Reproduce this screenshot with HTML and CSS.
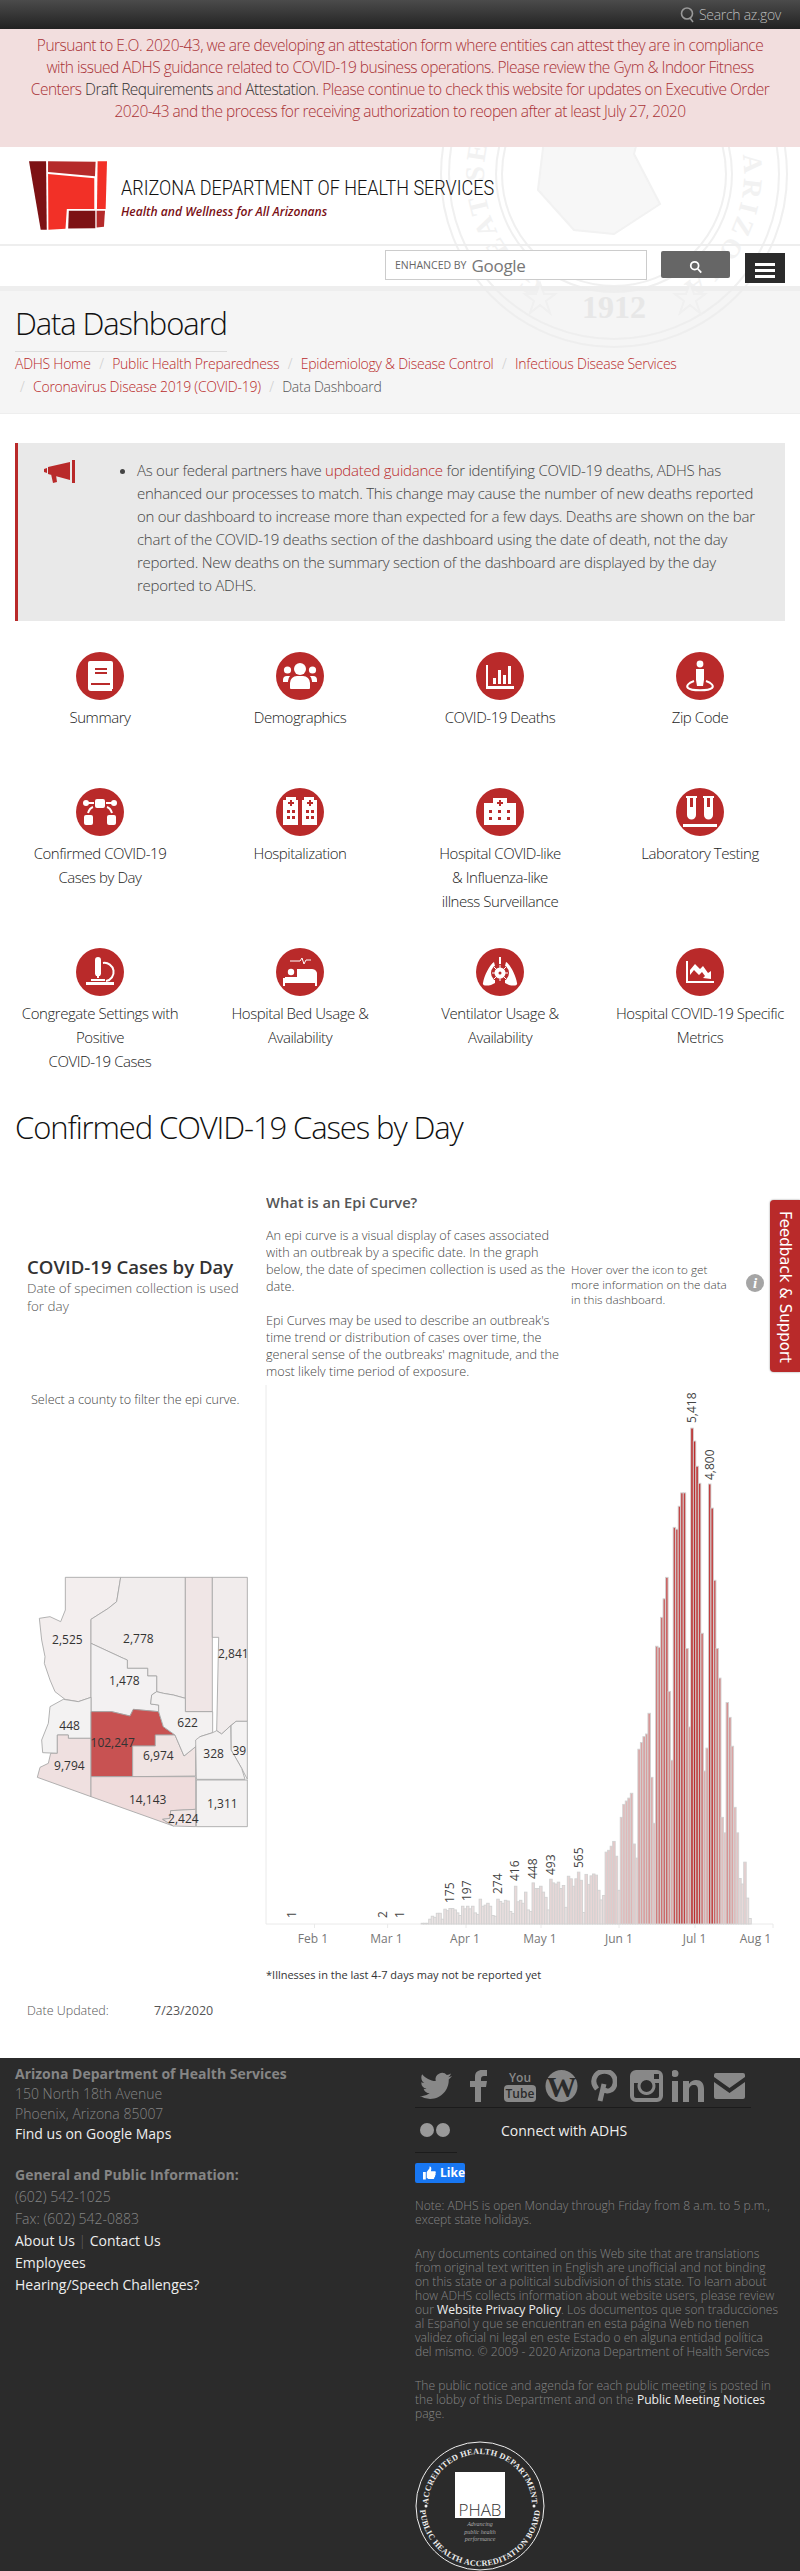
FILE: index.html
```html
<!DOCTYPE html>
<html lang="en">
<head>
    <meta charset="UTF-8">
    <meta name="viewport" content="width=device-width, initial-scale=1.0">
    <title>Data Dashboard</title>
    <link rel="stylesheet" href="styles.css">
</head>
<body>
    <div class="topbar">
        <svg class="topbar-icon" viewBox="0 0 16 16"><circle cx="7" cy="6.5" r="5.5"/><path d="M10 11l3 4"/></svg>
        <span>Search az.gov</span>
    </div>

    <div class="alert">
        Pursuant to E.O. 2020-43, we are developing an attestation form where entities can attest they are in compliance<br>
        with issued ADHS guidance related to COVID-19 business operations. Please review the Gym &amp; Indoor Fitness<br>
        Centers <a href="#">Draft Requirements</a> and <a href="#">Attestation</a>. Please continue to check this website for updates on Executive Order<br>
        2020-43 and the process for receiving authorization to reopen after at least July 27, 2020
    </div>

    <div class="masthead">
        <svg class="seal" viewBox="0 0 348 348">
            <defs>
                <path id="sealRing" d="M174 304a130 130 0 1 1 0-260a130 130 0 1 1 0 260"/>
            </defs>
            <circle cx="174" cy="174" r="173"/>
            <circle cx="174" cy="174" r="165"/>
            <circle cx="174" cy="174" r="118"/>
            <circle cx="174" cy="174" r="112"/>
            <text class="seal-ring"><textPath href="#sealRing" startOffset="9%" textLength="670">GREAT SEAL OF THE STATE OF ARIZONA</textPath></text>
            <path class="seal-fill" d="M92 60l30-34 40 14 44-16 42 30-20 50-24 10-10 40 26 50-46 30-40-4-36-40 6-50-24-20z"/>
            <text class="seal-year" x="174" y="178" text-anchor="middle">1912</text>
            <path class="seal-fill" d="M100 283l4 11 11 0-9 7 4 12-10-8-10 8 4-12-9-7 11 0zM250 283l4 11 11 0-9 7 4 12-10-8-10 8 4-12-9-7 11 0z"/>
        </svg>

        <header class="brand">
            <svg class="brand-logo" viewBox="27 35 233 205">
                <polygon fill="#7d1214" points="27,35 78,35 80,240 62,240"/>
                <polygon fill="#b52a2a" points="84,35 226,37 224,80 84,67"/>
                <polygon fill="#f23027" points="84,73 222,86 222,178 140,178 136,237 85,240"/>
                <polygon fill="#f23027" points="232,35 260,35 256,178 230,178"/>
                <polygon fill="#7d1214" points="146,183 225,183 225,235 144,236"/>
                <polygon fill="#b52a2a" points="229,183 254,183 251,231 229,233"/>
            </svg>
            <div class="brand-text">
                <div class="brand-name">ARIZONA DEPARTMENT OF HEALTH SERVICES</div>
                <div class="brand-tag">Health and Wellness for All Arizonans</div>
            </div>
        </header>

        <div class="searchrow">
            <div class="searchbox"><span class="enhanced">ENHANCED BY</span><span class="google">Google</span></div>
            <div class="searchbtn">
                <svg viewBox="0 0 16 16"><circle cx="6.5" cy="6.5" r="4.5"/><path d="M10 10l4 4.5"/></svg>
            </div>
            <div class="burger"><i></i><i></i><i></i></div>
        </div>

        <div class="titleblock">
            <h1 class="page-title">Data Dashboard</h1>
            <div class="crumbs">
                <a href="#">ADHS Home</a><span class="sep">/</span><a href="#">Public Health Preparedness</a><span class="sep">/</span><a href="#">Epidemiology &amp; Disease Control</a><span class="sep">/</span><a href="#">Infectious Disease Services</a><br>
                <span class="sep sep-first">/</span><a href="#">Coronavirus Disease 2019 (COVID-19)</a><span class="sep">/</span><span class="crumb-now">Data Dashboard</span>
            </div>
        </div>
    </div>

    <div class="callout">
        <svg class="callout-icon" viewBox="0 0 31 23">
            <path d="M0 9l3-1v5l-3-1zM4 7L26 2v18L4 14zM7 14l5 1 1 7-4 1zM28 0h3v23h-3z"/>
        </svg>
        <ul class="callout-list">
            <li>As our federal partners have <a href="#">updated guidance</a> for identifying COVID-19 deaths, ADHS has enhanced our processes to match. This change may cause the number of new deaths reported on our dashboard to increase more than expected for a few days. Deaths are shown on the bar chart of the COVID-19 deaths section of the dashboard using the date of death, not the day reported. New deaths on the summary section of the dashboard are displayed by the day reported to ADHS.</li>
        </ul>
    </div>

    <div class="tiles">
        <a class="tile" href="#">
            <svg class="tile-icon" viewBox="0 0 48 48"><circle class="disc" cx="24" cy="24" r="24"/>
                <path class="w" d="M14 9h21a2 2 0 0 1 2 2v26h-1v2H15a3 3 0 0 1-3-3V11a2 2 0 0 1 2-2z"/>
                <path class="r" d="M19 16h12v2H19zM19 20h12v2H19zM15 31h19v2H15z"/>
            </svg>
            <span>Summary</span>
        </a>
        <a class="tile" href="#">
            <svg class="tile-icon" viewBox="0 0 48 48"><circle class="disc" cx="24" cy="24" r="24"/>
                <circle class="w" cx="24" cy="17" r="6"/><circle class="w" cx="11.5" cy="18" r="3.6"/><circle class="w" cx="36.500" cy="18" r="3.6"/>
                <path class="w" d="M14 36v-5a7 7 0 0 1 7-7h6a7 7 0 0 1 7 7v5a1 1 0 0 1-1 1H15a1 1 0 0 1-1-1zM7 30v-2a4 4 0 0 1 4-4h3a9 9 0 0 0-2 5v1zM41 30v-2a4 4 0 0 0-4-4h-3a9 9 0 0 1 2 5v1z"/>
            </svg>
            <span>Demographics</span>
        </a>
        <a class="tile" href="#">
            <svg class="tile-icon" viewBox="0 0 48 48"><circle class="disc" cx="24" cy="24" r="24"/>
                <path class="w" d="M10 13h2v21h26v3H10zM17 26h3v6h-3zM22 18h3v14h-3zM27 23h3v9h-3zM32 14h3v18h-3z"/>
            </svg>
            <span>COVID-19 Deaths</span>
        </a>
        <a class="tile" href="#">
            <svg class="tile-icon" viewBox="0 0 48 48"><circle class="disc" cx="24" cy="24" r="24"/>
                <circle class="w" cx="24" cy="12" r="3.400"/>
                <path class="w" d="M20 17h8v11l-1 6h-6l-1-6z"/>
                <path class="ring" d="M18 29c-6 2-8 5-6 7 3 3 21 3 24 0 2-2 0-5-6-7"/>
            </svg>
            <span>Zip Code</span>
        </a>

        <a class="tile" href="#">
            <svg class="tile-icon" viewBox="0 0 48 48"><circle class="disc" cx="24" cy="24" r="24"/>
                <rect class="w" x="19" y="11" width="10" height="9" rx="2"/>
                <rect class="w" x="8" y="27" width="9" height="10" rx="2"/><rect class="w" x="31" y="27" width="9" height="10" rx="2"/>
                <circle class="w" cx="10" cy="15" r="3"/><circle class="w" cx="38" cy="15" r="3"/>
                <path class="ring" d="M12 15h6M36 15h-6M17 19c-3 1-4 3-5 6M31 19c3 1 4 3 5 6"/>
            </svg>
            <span>Confirmed COVID-19<br>Cases by Day</span>
        </a>
        <a class="tile" href="#">
            <svg class="tile-icon" viewBox="0 0 48 48"><circle class="disc" cx="24" cy="24" r="24"/>
                <path class="w" d="M10 9h10v3h2v25H7V12h3zM28 9h10v3h3v25H26V12h2z"/>
                <path class="r" d="M14 12h2v2h2v2h-2v2h-2v-2h-2v-2h2zM33 12h2v2h2v2h-2v2h-2v-2h-2v-2h2zM11 22h3v3h-3zM16 22h3v3h-3zM11 28h3v3h-3zM16 28h3v3h-3zM30 22h3v3h-3zM35 22h3v3h-3zM30 28h3v3h-3zM35 28h3v3h-3z"/>
            </svg>
            <span>Hospitalization</span>
        </a>
        <a class="tile" href="#">
            <svg class="tile-icon" viewBox="0 0 48 48"><circle class="disc" cx="24" cy="24" r="24"/>
                <path class="w" d="M17 10h14v5h9v22H8V15h9z"/>
                <path class="r" d="M23 12h2v2h2v2h-2v2h-2v-2h-2v-2h2zM13 22h3v3h-3zM22 22h3v3h-3zM31 22h3v3h-3zM13 29h3v3h-3zM22 29h3v3h-3zM31 29h3v3h-3z"/>
            </svg>
            <span>Hospital COVID-like<br>&amp; Influenza-like<br>illness Surveillance</span>
        </a>
        <a class="tile" href="#">
            <svg class="tile-icon" viewBox="0 0 48 48"><circle class="disc" cx="24" cy="24" r="24"/>
                <path class="w" d="M10 8h11v2h-1v17a4.500 4.500 0 0 1-9 0V10h-1zM27 8h11v2h-1v17a4.500 4.500 0 0 1-9 0V10h-1zM7 36h34v3H7z"/>
                <path class="r" d="M14 10h3v9h-3zM31 10h3v9h-3z"/>
            </svg>
            <span>Laboratory Testing</span>
        </a>

        <a class="tile" href="#">
            <svg class="tile-icon" viewBox="0 0 48 48"><circle class="disc" cx="24" cy="24" r="24"/>
                <path class="w" d="M19 12a3 3 0 0 1 6 0v14l-1 2h-1v2h-2v-2h-1l-1-2z"/>
                <path class="ring" d="M27 15a9 9 0 0 1 3 18"/>
                <path class="w" d="M15 31h14v2H15zM10 34h28v3H10z"/>
            </svg>
            <span>Congregate Settings with<br>Positive<br>COVID-19 Cases</span>
        </a>
        <a class="tile" href="#">
            <svg class="tile-icon" viewBox="0 0 48 48"><circle class="disc" cx="24" cy="24" r="24"/>
                <path class="ring thin" d="M14 13h10l2-3 2 6 2-4h5"/>
                <path class="w" d="M7 18h2v12h32v-3a5 5 0 0 0-5-6H21v8H9V18zM7 30h34v8h-2v-3H9v3H7z"/>
                <circle class="w" cx="15" cy="24" r="3.200"/>
            </svg>
            <span>Hospital Bed Usage &amp;<br>Availability</span>
        </a>
        <a class="tile" href="#">
            <svg class="tile-icon" viewBox="0 0 48 48"><circle class="disc" cx="24" cy="24" r="24"/>
                <path class="w" d="M23 9h2v9h-2zM18 14c-4 2-10 14-11 21-1 3 4 3 8 2l4-2V18zM30 14c4 2 10 14 11 21 1 3-4 3-8 2l-4-2V18z"/>
                <circle class="r" cx="24" cy="25" r="9"/>
                <circle class="w" cx="24" cy="25" r="5.500"/>
                <path class="ring thin" d="M24 17v16M16 25h16M18 19l12 12M30 19L18 31"/>
                <circle class="r" cx="24" cy="25" r="1.500"/>
            </svg>
            <span>Ventilator Usage &amp;<br>Availability</span>
        </a>
        <a class="tile" href="#">
            <svg class="tile-icon" viewBox="0 0 48 48"><circle class="disc" cx="24" cy="24" r="24"/>
                <path class="w" d="M10 13h2v20h26v2H10z"/>
                <path class="w" d="M14 22l5-6 5 5 3-3 5 7 3-2v8l-8-1 2-2-3-4-3 3-5-5-4 5z"/>
            </svg>
            <span>Hospital COVID-19 Specific<br>Metrics</span>
        </a>
    </div>

    <h2 class="section-title">Confirmed COVID-19 Cases by Day</h2>

    <section class="dash">
        <div class="dash-left">
            <div class="dash-title">COVID-19 Cases by Day</div>
            <div class="dash-sub">Date of specimen collection is used for day</div>
            <div class="county-hint">Select a county to filter the epi curve.</div>
            <svg class="azmap" viewBox="0 0 780 900">
                <g class="counties">
                    <polygon fill="#f3eeee" points="196,52 362,52 350,125 325,145 273,178 273,412 235,425 195,418 165,395 150,360 133,310 135,290 125,240 118,175 150,170 182,185 196,150"/>
                    <polygon fill="#f1eded" points="362,52 556,52 556,415 520,405 490,400 470,395 470,348 443,348 443,325 382,325 382,300 370,295 273,250 273,178 325,145 350,125"/>
                    <polygon fill="#f0e6e6" points="556,52 637,52 637,455 556,455"/>
                    <polygon fill="#f1ecec" points="637,52 742,52 742,484 708,484 692,497 665,522 650,512 656,232 637,232"/>
                    <polygon fill="#f3f1f2" points="273,250 370,295 382,300 382,325 443,325 443,348 470,348 470,395 455,405 452,432 476,435 476,455 400,448 390,468 335,455 273,455"/>
                    <polygon fill="#f3f2f2" points="190,418 235,425 273,412 273,535 205,535 205,525 172,525 172,580 128,578 125,540 145,490 150,440"/>
                    <polygon fill="#efe0e0" points="172,525 205,525 205,535 273,535 273,710 112,652 120,622 145,610 152,580 172,580"/>
                    <polygon fill="#c85252" points="273,455 335,455 390,468 400,448 476,455 490,500 525,525 466,525 466,558 398,558 398,650 273,650"/>
                    <polygon fill="#f0e4e3" points="398,558 466,558 466,525 525,525 552,588 587,560 587,648 398,650"/>
                    <polygon fill="#f3f1f1" points="455,405 470,395 490,400 520,405 556,415 556,455 638,455 638,518 600,530 587,560 552,588 525,525 490,500 476,455 476,435 452,432"/>
                    <polygon fill="#f4f2f2" points="708,484 742,484 742,658 725,625 705,590 693,570 693,497"/>
                    <polygon fill="#f3f1f1" points="587,540 600,530 638,518 650,512 665,522 692,497 693,570 705,590 725,625 735,658 589,658"/>
                    <polygon fill="#f3f1f1" points="589,660 742,660 742,800 589,800"/>
                    <polygon fill="#efdcdc" points="273,650 587,650 587,748 512,752 510,775 488,778 520,798 273,710"/>
                    <polygon fill="#f1e6e6" points="488,778 510,775 512,752 587,748 587,800 520,798"/>
                </g>
                <g class="county-labels">
                    <text x="202" y="251">2,525</text>
                    <text x="415" y="249">2,778</text>
                    <text x="700" y="295">2,841</text>
                    <text x="373" y="375">1,478</text>
                    <text x="209" y="510">448</text>
                    <text x="563" y="500">622</text>
                    <text x="338" y="560">102,247</text>
                    <text x="475" y="600">6,974</text>
                    <text x="641" y="593">328</text>
                    <text x="718" y="584">39</text>
                    <text x="208" y="630">9,794</text>
                    <text x="443" y="731">14,143</text>
                    <text x="667" y="743">1,311</text>
                    <text x="550" y="788">2,424</text>
                </g>
            </svg>
            <div class="updated"><span class="updated-label">Date Updated:</span><span>7/23/2020</span></div>
        </div>

        <div class="dash-right">
            <div class="dash-top">
                <div class="epi">
                    <h3 class="epi-title">What is an Epi Curve?</h3>
                    <p>An epi curve is a visual display of cases associated<br>with an outbreak by a specific date. In the graph<br>below, the date of specimen collection is used as the<br>date.</p>
                    <p>Epi Curves may be used to describe an outbreak's<br>time trend or distribution of cases over time, the<br>general sense of the outbreaks' magnitude, and the<br>most likely time period of exposure.</p>
                </div>
                <div class="hover-note">Hover over the icon to get more information on the data in this dashboard.</div>
                <div class="info-dot">i</div>
            </div>

            <svg class="epi-chart" id="epiChart" viewBox="0 0 540 580">
                <path class="axis" d="M6 5V544H513M54.500 544v4M127.600 544v4M206 544v4M281 544v4M359 544v4M435 544v4M513 544v4"/>
                <g id="epiBars"></g>
                <g class="bar-labels">
                    <text transform="translate(36 538) rotate(-90)">1</text>
                    <text transform="translate(127 538) rotate(-90)">2</text>
                    <text transform="translate(144 538) rotate(-90)">1</text>
                    <text transform="translate(194 523) rotate(-90)">175</text>
                    <text transform="translate(211 521) rotate(-90)">197</text>
                    <text transform="translate(242 514) rotate(-90)">274</text>
                    <text transform="translate(259 501) rotate(-90)">416</text>
                    <text transform="translate(277 499) rotate(-90)">448</text>
                    <text transform="translate(295 495) rotate(-90)">493</text>
                    <text transform="translate(323 488) rotate(-90)">565</text>
                    <text transform="translate(436 43) rotate(-90)">5,418</text>
                    <text transform="translate(454 100) rotate(-90)">4,800</text>
                </g>
                <g class="tick-labels">
                    <text x="53" y="563">Feb 1</text>
                    <text x="126.500" y="563">Mar 1</text>
                    <text x="205" y="563">Apr 1</text>
                    <text x="280" y="563">May 1</text>
                    <text x="359" y="563">Jun 1</text>
                    <text x="434.500" y="563">Jul 1</text>
                    <text x="495.500" y="563">Aug 1</text>
                </g>
            </svg>
            <div class="chart-note">*Illnesses in the last 4-7 days may not be reported yet</div>
        </div>

        <a class="feedback" href="#">Feedback &amp; Support</a>
    </section>

    <footer class="footer">
        <div class="foot-left">
            <div class="addr">
                <strong>Arizona Department of Health Services</strong><br>
                150 North 18th Avenue<br>
                Phoenix, Arizona 85007<br>
                <a href="#">Find us on Google Maps</a>
            </div>
            <div class="contact">
                <strong>General and Public Information:</strong><br>
                (602) 542-1025<br>
                Fax: (602) 542-0883<br>
                <a href="#">About Us</a> <span class="pipe">|</span> <a href="#">Contact Us</a><br>
                <a href="#">Employees</a><br>
                <a href="#">Hearing/Speech Challenges?</a>
            </div>
        </div>

        <div class="foot-right">
            <div class="socials">
                <svg class="soc soc-twitter" viewBox="0 0 24 24"><path d="M23.953 4.57a10 10 0 01-2.825.775 4.958 4.958 0 002.163-2.723c-.951.555-2.005.959-3.127 1.184a4.92 4.92 0 00-8.384 4.482C7.69 8.095 4.067 6.13 1.64 3.162a4.822 4.822 0 00-.666 2.475c0 1.71.87 3.213 2.188 4.096a4.904 4.904 0 01-2.228-.616v.06a4.923 4.923 0 003.946 4.827 4.996 4.996 0 01-2.212.085 4.936 4.936 0 004.604 3.417 9.867 9.867 0 01-6.102 2.105c-.39 0-.779-.023-1.17-.067a13.995 13.995 0 007.557 2.209c9.053 0 13.998-7.496 13.998-13.985 0-.21 0-.42-.015-.63A9.935 9.935 0 0024 4.59z"/></svg>
                <svg class="soc soc-fb" viewBox="0 0 17 32"><path d="M5 32V17H0v-6h5V7c0-5 3-7 7-7h5v6h-3c-2 0-3 1-3 3v2h6l-1 6h-5v15z"/></svg>
                <div class="soc-yt"><span class="yt-you">You</span><span class="yt-tube">Tube</span></div>
                <svg class="soc soc-wp" viewBox="0 0 33 32"><circle cx="16.500" cy="16" r="16"/><text x="16.500" y="27" text-anchor="middle">W</text></svg>
                <svg class="soc soc-pin" viewBox="0 0 26 32"><path d="M9 31l4-17M6 19C2 14 2 9 5 5c4-5 13-5 17 0 4 5 2 13-2 15-3 2-7 1-7-2"/></svg>
                <svg class="soc soc-ig" viewBox="0 0 33 32"><path d="M6 0h21a6 6 0 0 1 6 6v20a6 6 0 0 1-6 6H6a6 6 0 0 1-6-6V6a6 6 0 0 1 6-6zM4 13v13a2 2 0 0 0 2 2h21a2 2 0 0 0 2-2V13h-4a9 9 0 1 1-17 0zM16.500 10a6 6 0 1 0 0 12 6 6 0 0 0 0-12zM24 4v5h5V4z" fill-rule="evenodd"/></svg>
                <svg class="soc soc-in" viewBox="0 0 32 32"><path d="M0 11h6v21H0zM3 0a3.500 3.500 0 1 1 0 7 3.500 3.500 0 0 1 0-7zM11 11h6v3c2-3 4-4 7-4 5 0 8 3 8 9v13h-6V20c0-3-1-5-4-5s-5 2-5 5v12h-6z"/></svg>
                <svg class="soc soc-mail" viewBox="0 0 31 26"><path d="M2 0h27a2 2 0 0 1 2 2v2L15.500 15 0 4V2a2 2 0 0 1 2-2zM0 9l15.500 11L31 9v15a2 2 0 0 1-2 2H2a2 2 0 0 1-2-2z"/></svg>
            </div>
            <div class="connect">
                <span class="flickr"><i></i><i></i></span>
                <a href="#">Connect with ADHS</a>
            </div>
            <div class="short-rule"></div>
            <a class="like" href="#">
                <svg viewBox="0 0 14 14"><path d="M0 6h3v8H0zM4 6l3-4V0c2 0 2.500 2 1.500 5H13c1 0 1 2 .4 2.500.5.800.2 2-.4 2.300.2 1-.2 1.800-.8 2 0 1-.6 1.700-1.200 1.700H6c-1 0-2-.500-2-1z"/></svg>
                Like
            </a>
            <p class="foot-note">Note: ADHS is open Monday through Friday from 8 a.m. to 5 p.m., except state holidays.</p>
            <p class="foot-note">Any documents contained on this Web site that are translations from original text written in English are unofficial and not binding on this state or a political subdivision of this state. To learn about how ADHS collects information about website users, please review our <a href="#">Website Privacy Policy</a>. Los documentos que son traducciones al Español y que se encuentran en esta página Web no tienen validez oficial ni legal en este Estado o en alguna entidad política del mismo. © 2009 - 2020 Arizona Department of Health Services</p>
            <p class="foot-note">The public notice and agenda for each public meeting is posted in the lobby of this Department and on the <a href="#">Public Meeting Notices</a> page.</p>
            <svg class="phab" viewBox="0 0 130 130">
                <defs>
                    <path id="phabTop" d="M13 65a52 52 0 0 1 104 0"/>
                    <path id="phabBottom" d="M5 65a60 60 0 0 0 120 0"/>
                </defs>
                <circle class="phab-ring" cx="65" cy="65" r="64"/>
                <text class="phab-arc"><textPath href="#phabTop" startOffset="50%" text-anchor="middle">ACCREDITED HEALTH DEPARTMENT</textPath></text>
                <text class="phab-arc"><textPath href="#phabBottom" startOffset="50%" text-anchor="middle">PUBLIC HEALTH ACCREDITATION BOARD</textPath></text>
                <circle class="phab-dot" cx="11" cy="65" r="1.500"/>
                <circle class="phab-dot" cx="119" cy="65" r="1.500"/>
                <rect class="phab-box" x="40" y="31" width="50" height="46"/>
                <text class="phab-name" x="65" y="75" text-anchor="middle">PHAB</text>
                <text class="phab-tag" x="65" y="85" text-anchor="middle">Advancing</text>
                <text class="phab-tag" x="65" y="92.500" text-anchor="middle">public health</text>
                <text class="phab-tag" x="65" y="100" text-anchor="middle">performance</text>
            </svg>
        </div>
    </footer>

    <script src="chart.js"></script>
</body>
</html>
```

FILE: styles.css
```css
* {
    box-sizing: border-box;
}

body {
    margin: 0;
    background-color: #fff;
    font-family: "Open Sans", sans-serif;
    color: #333;
}

a {
    text-decoration: none;
}

.topbar {
    height: 29px;
    padding-right: 19px;
    display: flex;
    align-items: center;
    justify-content: flex-end;
    gap: 3px;
    background: linear-gradient(#4b4b4b, #222);
    color: #bbb;
    font-size: 14px;
    font-weight: 300;
    letter-spacing: -.3px;
}

.topbar-icon {
    width: 16px;
    height: 16px;
    fill: none;
    stroke: #999;
    stroke-width: 1.6;
}

.alert {
    height: 118px;
    padding: 5px 20px 0;
    background-color: #f2dede;
    color: #a93236;
    font-size: 15.500px;
    font-weight: 300;
    letter-spacing: -.5px;
    line-height: 22px;
    text-align: center;
}

.alert a {
    color: #333;
}

.masthead {
    position: relative;
    overflow: hidden;
}

.seal {
    position: absolute;
    left: 440px;
    top: -147px;
    width: 348px;
    height: 348px;
    z-index: 1;
    pointer-events: none;
    fill: none;
    stroke: #ededed;
    stroke-width: 2;
    opacity: .8;
}

.seal-ring {
    font-family: "Liberation Serif", serif;
    font-size: 27px;
    font-weight: bold;
    fill: #efefef;
    stroke: none;
}

.seal-year {
    font-family: "Liberation Serif", serif;
    font-size: 32px;
    font-weight: bold;
    fill: #e4e4e4;
    stroke: none;
    transform: translateY(140px);
}

.seal-fill {
    fill: #f6f6f6;
    stroke: #efefef;
}

.brand {
    height: 99px;
    padding: 14px 0 0 29px;
    display: flex;
    gap: 14px;
    border-bottom: 2px solid #eee;
}

.brand-logo {
    width: 78px;
    height: 69px;
}

.brand-text {
    position: relative;
    z-index: 2;
    padding-top: 14px;
}

.brand-name {
    font-family: "Roboto", sans-serif;
    font-size: 21px;
    font-weight: 300;
    line-height: 26px;
    color: #111;
    white-space: nowrap;
    transform: scaleX(.857);
    transform-origin: left;
}

.brand-tag {
    font-size: 12.100px;
    font-style: italic;
    font-weight: 600;
    line-height: 18px;
    margin-top: 2px;
    color: #7a1015;
}

.searchrow {
    height: 40px;
    padding: 4px 15px 0 385px;
    display: flex;
    align-items: flex-start;
}

.searchrow > div {
    position: relative;
    z-index: 2;
}

.searchbox {
    width: 262px;
    height: 30px;
    padding-left: 9px;
    display: flex;
    align-items: center;
    gap: 5px;
    border: 1px solid #ccc;
    background-color: #fff;
}

.enhanced {
    font-size: 10.500px;
    color: #666;
}

.google {
    font-size: 17px;
    letter-spacing: -.3px;
    color: #777;
}

.searchbtn {
    width: 69px;
    height: 27px;
    margin: 1px 0 0 14px;
    padding-top: 6px;
    text-align: center;
    background-color: #666;
    border-radius: 2px;
}

.searchbtn svg {
    width: 14px;
    height: 14px;
    fill: none;
    stroke: #fff;
    stroke-width: 2;
}

.burger {
    width: 40px;
    height: 30px;
    margin: 3px 0 0 15px;
    padding: 10px 10px 0;
    background-color: #2b2b2b;
}

.burger i {
    display: block;
    height: 3px;
    margin-bottom: 3px;
    background-color: #fff;
}

.titleblock {
    height: 128px;
    padding: 0 15px;
    background-color: #f5f5f5;
    border-top: 5px solid #eee;
    border-bottom: 1px solid #eee;
}

.page-title {
    display: inline-block;
    margin: 0;
    padding: 9px 0 5px;
    font-size: 31px;
    font-weight: 300;
    letter-spacing: -1.15px;
    line-height: 46px;
    color: #111;
    border-bottom: 1px solid #ddd;
}

.crumbs {
    position: relative;
    z-index: 2;
    font-size: 14px;
    font-weight: 300;
    letter-spacing: -.26px;
    line-height: 23px;
    color: #555;
}

.crumbs a {
    color: #b92a2a;
}

.sep {
    margin: 0 8.500px;
    color: #ccc;
}

.sep-first {
    margin-left: 5px;
}

.crumb-now {
    color: #555;
}

.callout {
    height: 178px;
    margin: 29px 15px 0;
    padding: 16px 25px 0 26px;
    display: flex;
    background-color: #e9e9e9;
    border-left: 3px solid #b92a2a;
}

.callout-icon {
    flex: none;
    width: 31px;
    height: 23px;
    margin-top: 1px;
    fill: #b92a2a;
}

.callout-list {
    margin: 0;
    padding: 0 0 0 62px;
    font-size: 15px;
    font-weight: 300;
    letter-spacing: -.26px;
    line-height: 23px;
    color: #444;
}

.callout-list a {
    color: #b92a2a;
}

.tiles {
    margin-top: 31px;
    display: grid;
    grid-template-columns: repeat(4, 200px);
    row-gap: 35px;
}

.tile {
    min-height: 101px;
    text-align: center;
    font-size: 15px;
    font-weight: 300;
    letter-spacing: -.45px;
    line-height: 24px;
    color: #222;
}

.tile span {
    display: block;
    margin-top: 5px;
}

.tile-icon {
    display: block;
    width: 48px;
    height: 48px;
    margin: 0 auto;
}

.disc,
.r {
    fill: #b92a2a;
}

.w {
    fill: #fff;
}

.ring {
    fill: none;
    stroke: #fff;
    stroke-width: 2;
}

.ring.thin {
    stroke-width: 1;
}

.section-title {
    margin: 32px 0 0 15px;
    font-size: 31px;
    font-weight: 300;
    letter-spacing: -1.1px;
    line-height: 45px;
    color: #111;
}

.dash {
    position: relative;
    height: 868px;
    margin-top: 40px;
    display: grid;
    grid-template-columns: 266px 534px;
}

.dash-title {
    margin: 66px 0 0 27px;
    font-size: 18.600px;
    font-weight: 600;
    line-height: 22px;
    color: #333;
    white-space: nowrap;
}

.dash-sub {
    margin: 1px 15px 0 27px;
    font-size: 13.400px;
    font-weight: 300;
    line-height: 18px;
    color: #555;
}

.county-hint {
    margin: 77px 0 0 31px;
    font-size: 12.600px;
    font-weight: 300;
    line-height: 16px;
    color: #444;
}

.azmap {
    display: block;
    width: 260px;
    height: 300px;
    margin-top: 152px;
}

.counties polygon {
    stroke: #a3a3a3;
    stroke-width: 2.500;
    stroke-linejoin: round;
}

.county-labels text {
    font-size: 36px;
    fill: #333;
    text-anchor: middle;
}

.updated {
    margin: 143px 0 0 27px;
    display: flex;
    font-size: 12.500px;
    line-height: 16px;
    color: #555;
}

.updated-label {
    width: 127px;
    font-weight: 300;
}

.dash-top {
    position: relative;
    height: 190px;
    padding-top: 2px;
    display: flex;
}

.epi {
    width: 305px;
    height: 185px;
    overflow: hidden;
    font-size: 12.700px;
    font-weight: 300;
    line-height: 17px;
    color: #444;
}

.epi-title {
    margin: 0 0 15px;
    font-size: 14.700px;
    font-weight: 600;
    line-height: 20px;
    color: #555;
}

.epi p {
    margin: 0 0 17px;
}

.hover-note {
    width: 160px;
    margin-top: 70px;
    font-size: 11.700px;
    font-weight: 300;
    line-height: 15px;
    color: #444;
}

.info-dot {
    width: 18px;
    height: 18px;
    margin: 82px 0 0 15px;
    border-radius: 50%;
    background-color: #a5a5a5;
    color: #fff;
    font-family: "Liberation Serif", serif;
    font-size: 15px;
    font-weight: bold;
    font-style: italic;
    line-height: 18px;
    text-align: center;
}

.epi-chart {
    display: block;
    width: 540px;
    height: 580px;
    margin-left: -6px;
    overflow: hidden;
}

.axis {
    fill: none;
    stroke: #eaeaea;
    stroke-width: 1;
}

.bar-labels text {
    font-size: 12px;
    fill: #444;
}

.tick-labels text {
    font-size: 12px;
    fill: #777;
    text-anchor: middle;
}

.chart-note {
    margin-top: 7px;
    font-size: 11px;
    line-height: 16px;
    color: #333;
}

.feedback {
    position: absolute;
    top: 10px;
    right: 0;
    width: 30px;
    height: 172px;
    padding-top: 11px;
    writing-mode: vertical-rl;
    background-color: #b92a2a;
    border-radius: 4px 0 0 4px;
    box-shadow: 0 0 2px #888;
    color: #fff;
    font-family: "DejaVu Sans", sans-serif;
    font-size: 15px;
    line-height: 30px;
}

.footer {
    height: 513px;
    overflow: hidden;
    display: grid;
    grid-template-columns: 415px 385px;
    background-color: #2b2b2b;
    color: #858585;
    font-size: 14px;
    font-weight: 300;
}

.footer a {
    color: #eee;
    font-weight: 400;
}

.foot-left {
    padding: 6px 0 0 15px;
}

.footer strong {
    font-weight: 700;
}

.addr {
    line-height: 20px;
}

.contact {
    margin-top: 20px;
    line-height: 22px;
}

.pipe {
    color: #666;
}

.socials {
    width: 336px;
    height: 50px;
    padding: 12px 0 0 5px;
    display: flex;
    align-items: flex-start;
    border-bottom: 1px solid #1b1b1b;
}

.soc {
    display: block;
    height: 32px;
    fill: #888;
}

.soc-twitter {
    width: 32px;
}

.soc-fb {
    width: 17px;
    margin-left: 18px;
}

.soc-yt {
    width: 32px;
    margin-left: 17px;
    text-align: center;
    color: #888;
    font-size: 12px;
    font-weight: 600;
    line-height: 15px;
}

.yt-you {
    display: block;
}

.yt-tube {
    display: block;
    height: 17px;
    border-radius: 4px;
    background-color: #888;
    color: #2b2b2b;
    line-height: 17px;
}

.soc-wp {
    width: 33px;
    margin-left: 9px;
}

.soc-wp text {
    font-family: "Liberation Serif", serif;
    font-size: 30px;
    font-weight: bold;
    fill: #2b2b2b;
}

.soc-pin {
    width: 26px;
    margin-left: 13px;
    fill: none;
    stroke: #888;
    stroke-width: 5;
}

.soc-ig {
    width: 33px;
    margin-left: 13px;
}

.soc-in {
    width: 32px;
    margin-left: 9px;
}

.soc-mail {
    width: 31px;
    height: 26px;
    margin: 3px 0 0 10px;
}

.connect {
    height: 44px;
    padding-left: 5px;
    display: flex;
    align-items: center;
}

.flickr {
    width: 81px;
    display: flex;
    gap: 2px;
}

.flickr i {
    width: 14px;
    height: 14px;
    border-radius: 50%;
    background-color: #999;
}

.short-rule {
    width: 42px;
    height: 1px;
    background-color: #1b1b1b;
}

.like {
    width: 50px;
    height: 20px;
    margin-top: 10px;
    padding-left: 8px;
    display: flex;
    align-items: center;
    gap: 4px;
    background-color: #1877f2;
    border-radius: 2px;
    font-size: 12px;
    font-weight: 700;
    line-height: 20px;
}

.footer .like {
    color: #fff;
    font-weight: 700;
}

.like svg {
    width: 13px;
    height: 14px;
    fill: #fff;
}

.foot-note {
    margin: 16px 19px 20px 0;
    font-size: 12.100px;
    line-height: 14px;
    color: #858585;
}

.foot-note + .foot-note {
    margin-top: 20px;
}

.phab {
    display: block;
    width: 130px;
    height: 130px;
    margin-top: 19px;
}

.phab-ring {
    fill: none;
    stroke: #eee;
    stroke-width: 1;
}

.phab-arc {
    font-family: "Liberation Serif", serif;
    font-size: 8.200px;
    letter-spacing: .3px;
    font-weight: bold;
    fill: #eee;
}

.phab-dot {
    fill: #eee;
}

.phab-box {
    fill: #fff;
}

.phab-name {
    font-size: 17px;
    font-weight: 300;
    fill: #333;
}

.phab-tag {
    font-family: "Liberation Serif", serif;
    font-size: 6px;
    font-style: italic;
    fill: #aaa;
}
```

FILE: chart.js
```js
"use strict";

// bar tops read off the source chart, one per day, last entry is Jul 23
var tops = [
    1466, 1466, 1466, 1455, 1447, 1450, 1439, 1439, 1455, 1428,
    1432, 1426, 1426, 1430, 1438, 1445, 1420, 1427, 1420, 1427,
    1420, 1438, 1442, 1401, 1420, 1417, 1412, 1420, 1445, 1447,
    1401, 1407, 1412, 1404, 1406, 1434, 1440, 1366, 1408, 1404,
    1412, 1382, 1430, 1434, 1357, 1372, 1372, 1366, 1382, 1396,
    1430, 1347, 1357, 1360, 1355, 1372, 1364, 1423, 1339, 1346,
    1366, 1346, 1328, 1350, 1437, 1334, 1361, 1338, 1333, 1336,
    1377, 1403, 1391, 1274, 1269, 1258, 1245, 1285, 1377, 1180,
    1145, 1136, 1128, 1115, 1252, 1290, 996, 978, 962, 955,
    899, 1072, 1196, 718, 721, 640, 590, 532, 840, 1026,
    397, 402, 340, 304, 304, 724, 936, 129, 164, 232,
    278, 683, 1055, 993, 280, 345, 540, 724, 804, 1180,
    1222, 870, 910, 988, 1153, 1222, 1345, 1360, 1301, 1398,
    1453
];

var NS = "http://www.w3.org/2000/svg";
var bars = document.getElementById("epiBars");
var baseY = 544;
var dayWidth = 2.52;
var lastX = 490;
var maxH = (1468 - 129) / 2.7;

tops.forEach(function (top, i) {
    var h = (1468 - top) / 2.7;
    var t = h / maxH;
    var rect = document.createElementNS(NS, "rect");

    rect.setAttribute("x", lastX - (tops.length - 1 - i) * dayWidth - dayWidth / 2);
    rect.setAttribute("y", baseY - h);
    rect.setAttribute("width", dayWidth);
    rect.setAttribute("height", h);
    rect.setAttribute("fill", "rgb(" + Math.round(236 - t * 49) + "," + Math.round(231 - t * 190) + "," + Math.round(231 - t * 190) + ")");
    rect.setAttribute("stroke", "#d2d2d2");
    rect.setAttribute("stroke-width", "0.9");
    bars.appendChild(rect);
});
```
